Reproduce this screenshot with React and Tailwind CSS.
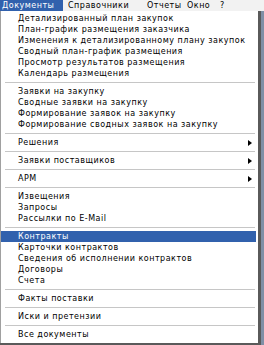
import React from "react";

const groups = [
  [
    "Детализированный план закупок",
    "План-график размещения заказчика",
    "Изменения к детализированному плану закупок",
    "Сводный план-график размещения",
    "Просмотр результатов размещения",
    "Календарь размещения",
  ],
  [
    "Заявки на закупку",
    "Сводные заявки на закупку",
    "Формирование заявок на закупку",
    "Формирование сводных заявок на закупку",
  ],
  [{ label: "Решения", sub: true }],
  [{ label: "Заявки поставщиков", sub: true }],
  [{ label: "АРМ", sub: true }],
  ["Извещения", "Запросы", "Рассылки по E-Mail"],
  [
    { label: "Контракты", active: true },
    "Карточки контрактов",
    "Сведения об исполнении контрактов",
    "Договоры",
    "Счета",
  ],
  ["Факты поставки"],
  ["Иски и претензии"],
  ["Все документы"],
];

function Item({ item }) {
  const it = typeof item === "string" ? { label: item } : item;
  return (
    <div
      className={`h-[11px] flex items-center pl-[17px] pr-[4px] ${
        it.active ? "bg-[#3161ad] text-white" : "text-black"
      }`}
    >
      <span className="flex-1 whitespace-nowrap">{it.label}</span>
      {it.sub && (
        <svg width="4" height="6" viewBox="0 0 4 6">
          <path d="M0 0 L4 3 L0 6 Z" fill="#000" />
        </svg>
      )}
    </div>
  );
}

export default function App() {
  return (
    <div
      className="w-[264px] h-[345px] bg-[#7f8fa6] relative overflow-hidden text-[8px] leading-none tracking-[0.5px]"
      style={{ fontFamily: '"DejaVu Sans", Verdana, sans-serif' }}
    >
      <div className="h-[11px] bg-[#f2f2f2] flex items-center text-black whitespace-nowrap">
        <div className="h-full pl-[2px] flex items-center bg-[#3161ad] text-white w-[63px]">
          Документы
        </div>
        <div className="pl-[5px] w-[84px]">Справочники</div>
        <div className="w-[40px]">Отчеты</div>
        <div className="w-[33px]">Окно</div>
        <div>?</div>
      </div>
      <div className="w-[261px] border-r-[3px] border-b-[3px] border-[#5a5a5a]">
        <div className="bg-white border-l border-[#a0a0a0] pt-[2px] pb-[3px] pr-[2px]">
          {groups.map((g, gi) => (
            <div key={gi}>
              {gi > 0 && (
                <div className="h-[7px] flex items-center pl-[4px] pr-[1px]">
                  <div className="h-px w-full bg-[#c6c6c6]" />
                </div>
              )}
              {g.map((item, i) => (
                <Item key={i} item={item} />
              ))}
            </div>
          ))}
        </div>
      </div>
    </div>
  );
}
